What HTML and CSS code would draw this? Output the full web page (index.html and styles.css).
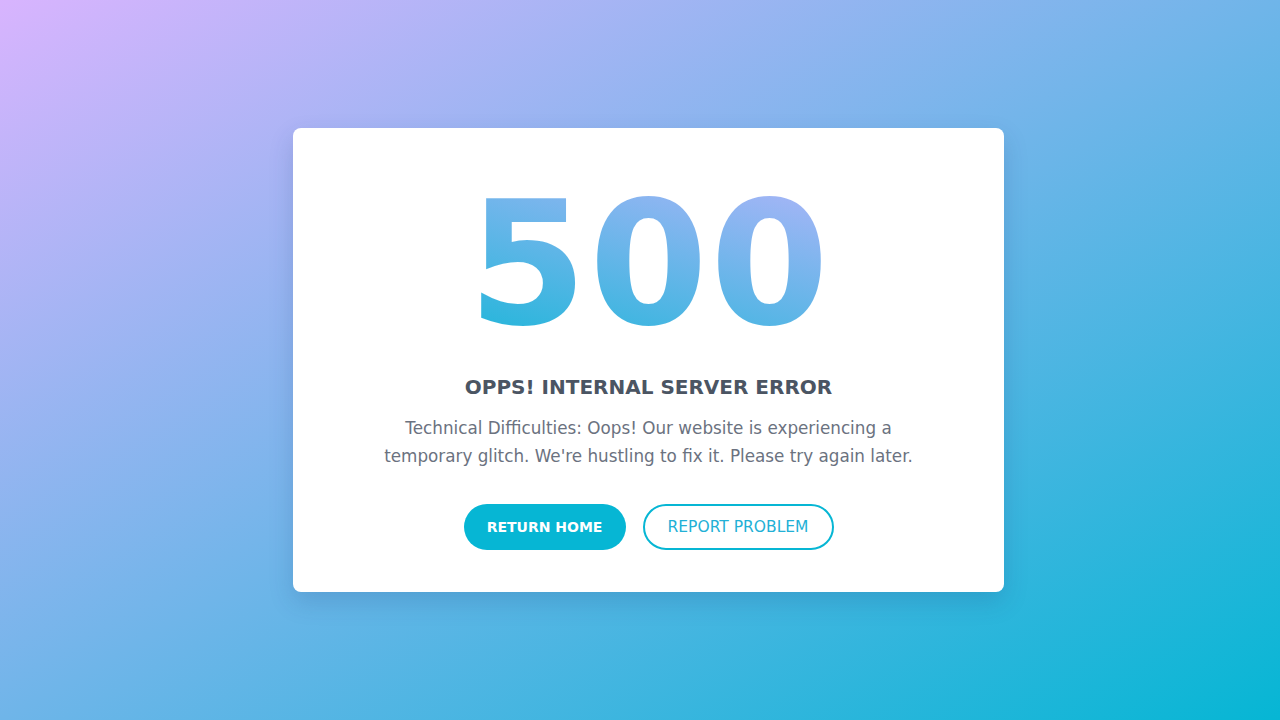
FILE: index.html
```html
<!DOCTYPE html>
<html lang="en">
<head>
<meta charset="utf-8">
<title>500 - Internal Server Error</title>
<link rel="stylesheet" href="styles.css">
</head>
<body>
<main class="page">
  <section class="card">
    <h1 class="code">500</h1>
    <h2 class="title">OPPS! INTERNAL SERVER ERROR</h2>
    <p class="message">Technical Difficulties: Oops! Our website is experiencing a temporary glitch. We're hustling to fix it. Please try again later.</p>
    <div class="actions">
      <a class="btn btn-primary" href="#">RETURN HOME</a>
      <a class="btn btn-outline" href="#">REPORT PROBLEM</a>
    </div>
  </section>
</main>
</body>
</html>
```

FILE: styles.css
```css
* { box-sizing: border-box; }
html, body { margin: 0; padding: 0; }
body {
  font-family: "DejaVu Sans", "Open Sans", sans-serif;
  background: linear-gradient(to bottom right, #d8b4fe, #06b6d4);
  min-height: 100vh;
}
.page {
  min-height: 100vh;
  display: flex;
  align-items: center;
  justify-content: center;
  padding-left: 17px;
}
.card {
  width: 711px;
  background: #fff;
  border-radius: 8px;
  box-shadow: 0 10px 25px rgba(30, 60, 120, 0.18);
  padding: 51px 40px 42px;
  text-align: center;
}
.code {
  margin: 0;
  font-size: 171px;
  font-weight: 700;
  line-height: 1;
  letter-spacing: 2px;
  text-indent: 2px;
  background: linear-gradient(to top right, #06b6d4, #c4b5fd);
  -webkit-background-clip: text;
  background-clip: text;
  color: transparent;
}
.title {
  margin: 25px 0 0;
  font-size: 20px;
  line-height: 24px;
  font-weight: 700;
  color: #4b5563;
}
.message {
  margin: 15px auto 0;
  max-width: 545px;
  font-size: 16.8px;
  line-height: 28px;
  color: #6b7280;
}
.actions {
  margin-top: 34px;
  display: flex;
  justify-content: center;
  gap: 17px;
}
.btn {
  display: inline-flex;
  align-items: center;
  justify-content: center;
  height: 46px;
  border-radius: 23px;
  text-decoration: none;
}
.btn-primary {
  width: 162px;
  background: #06b6d4;
  color: #fff;
  font-size: 14px;
  font-weight: 700;
}
.btn-outline {
  width: 191px;
  border: 2px solid #06b6d4;
  color: #22b0d6;
  font-size: 15.5px;
  font-weight: 400;
}
```
